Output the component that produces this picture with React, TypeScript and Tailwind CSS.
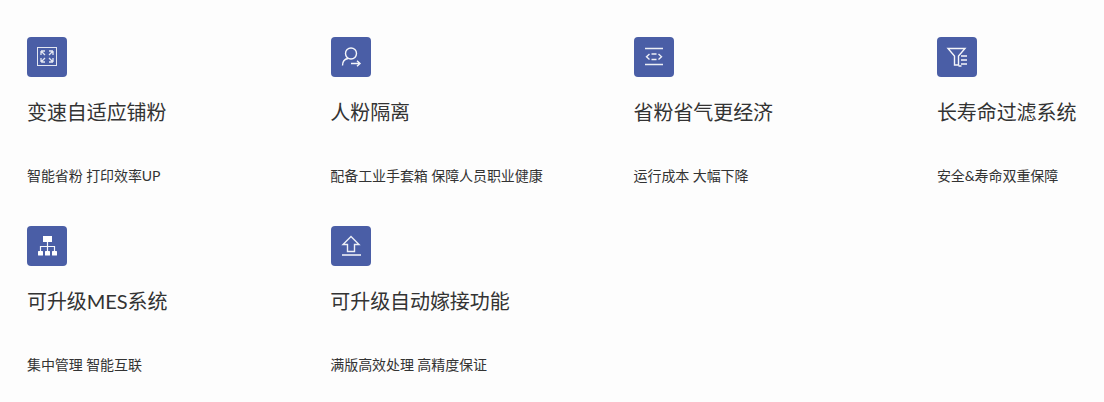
import { ReactNode } from "react";

const iconStroke = {
  fill: "none",
  stroke: "#fff",
  strokeWidth: 1,
  opacity: 0.85,
};

const icons: Record<string, ReactNode> = {
  expand: (
    <g {...iconStroke}>
      <rect x="10.500" y="10.500" width="19" height="18" />
      <path d="M14 14l4 4M14 14h4M14 14v4M26 14l-4 4M26 14h-4M26 14v4M14 25l4-4M14 25h4M14 25v-4M26 25l-4-4M26 25h-4M26 25v-4" strokeWidth="1.300" />
    </g>
  ),
  person: (
    <g {...iconStroke} opacity={0.95} strokeWidth={1.4}>
      <circle cx="20" cy="16.500" r="5.500" />
      <path d="M11.500 28.500c0-4 2.500-6.500 5.500-7" />
      <path d="M20 26.500h9M26 23.800l3 2.700-3 2.700" />
    </g>
  ),
  code: (
    <g {...iconStroke} opacity={0.9} strokeWidth={1.4}>
      <path d="M11 11.500h18M11 27.500h18" />
      <path d="M15.500 17l-3 2.700 3 2.700M24.500 17l3 2.700-3 2.700M17.500 17h5M17.500 22.500h5" />
    </g>
  ),
  filter: (
    <g {...iconStroke} opacity={0.95} strokeWidth={1.4}>
      <path d="M11 11.500h17l-6.500 7.500v9h-4v-9z" />
      <path d="M24 19h6M24 23h6M24 27h6M21.500 29h3" />
    </g>
  ),
  tree: (
    <g>
      <rect x="16" y="10" width="9" height="6" fill="#fff" />
      <path d="M20.500 16v9M13.500 26v-5.500h14v5.500" {...iconStroke} opacity={0.95} strokeWidth={1.2} />
      <rect x="11" y="25" width="5" height="4.500" rx="0.500" fill="#fff" />
      <rect x="18" y="25" width="5" height="4.500" rx="0.500" fill="#fff" />
      <rect x="25" y="25" width="5" height="4.500" rx="0.500" fill="#fff" />
    </g>
  ),
  upload: (
    <g {...iconStroke} opacity={0.9} strokeWidth={1.4}>
      <path d="M20 10.500l-8 8h4.500v7h7v-7h4.500z" />
      <path d="M11 29h19" strokeWidth="1.600" />
    </g>
  ),
};

const items = [
  { icon: "expand", title: "变速自适应铺粉", desc: "智能省粉 打印效率UP" },
  { icon: "person", title: "人粉隔离", desc: "配备工业手套箱 保障人员职业健康" },
  { icon: "code", title: "省粉省气更经济", desc: "运行成本 大幅下降" },
  { icon: "filter", title: "长寿命过滤系统", desc: "安全&寿命双重保障" },
  { icon: "tree", title: "可升级MES系统", desc: "集中管理 智能互联" },
  { icon: "upload", title: "可升级自动嫁接功能", desc: "满版高效处理 高精度保证" },
];

function Feature({ icon, title, desc }: { icon: string; title: string; desc: string }) {
  return (
    <div className="h-[189px] pt-[37px]">
      <div className="w-10 h-10 rounded-[4px] bg-[#4a5ea6]">
        <svg width="40" height="40" viewBox="0 0 40 40">{icons[icon]}</svg>
      </div>
      <h3 className="mt-5 -ml-[0.300px] h-[30px] text-xl leading-[30px] tracking-[-0.080px] font-normal text-[#333] whitespace-nowrap">{title}</h3>
      <p className="mt-[39px] -ml-[0.300px] text-sm leading-[20px] tracking-[-0.080px] text-[#333] whitespace-nowrap">{desc}</p>
    </div>
  );
}

export default function App() {
  return (
    <div className="w-[1104px] h-[402px] overflow-hidden bg-[#fdfdfd] pl-[27.300px] font-['Lato','Noto_Sans_CJK_SC',sans-serif]">
      <div className="grid grid-cols-[repeat(4,303.300px)]">
        {items.map((item) => (
          <Feature key={item.title} {...item} />
        ))}
      </div>
    </div>
  );
}
